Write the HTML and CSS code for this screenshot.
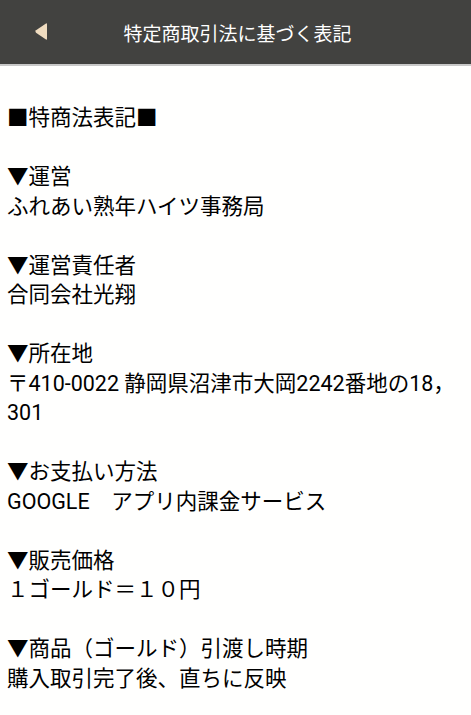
FILE: index.html
```html
<!DOCTYPE html>
<html lang="ja">
<head>
<meta charset="utf-8">
<link rel="stylesheet" href="styles.css">
</head>
<body>
<header class="topbar">
  <span class="back">
    <svg width="14" height="19" viewBox="0 0 14 19"><path d="M12 1.5 L2 8.2 Q0.8 9.5 2 10.8 L12 17.5 Q13 18 13 16.8 L13 2.2 Q13 1 12 1.5 Z" fill="#f0dcc0"/></svg>
  </span>
  <h1 class="title">特定商取引法に基づく表記</h1>
</header>
<main class="content">
  <section class="block">
    <p>■特商法表記■</p>
  </section>
  <section class="block">
    <p>▼運営</p>
    <p>ふれあい熟年ハイツ事務局</p>
  </section>
  <section class="block">
    <p>▼運営責任者</p>
    <p>合同会社光翔</p>
  </section>
  <section class="block">
    <p>▼所在地</p>
    <p>〒410-0022 静岡県沼津市大岡2242番地の18，301</p>
  </section>
  <section class="block">
    <p>▼お支払い方法</p>
    <p>GOOGLE　アプリ内課金サービス</p>
  </section>
  <section class="block">
    <p>▼販売価格</p>
    <p>１ゴールド＝１０円</p>
  </section>
  <section class="block">
    <p>▼商品（ゴールド）引渡し時期</p>
    <p>購入取引完了後、直ちに反映</p>
  </section>
</main>
</body>
</html>
```

FILE: styles.css
```css
html, body {
  margin: 0;
  padding: 0;
  background: #fffffe;
}
body {
  font-family: Roboto, "Noto Sans CJK JP", "Noto Sans", sans-serif;
  color: #000;
}
.topbar {
  height: 64px;
  background: #424240;
  border-bottom: 2px solid #c8c8c8;
  display: flex;
  align-items: center;
  justify-content: center;
  position: relative;
}
.back {
  position: absolute;
  left: 34px;
  top: 22px;
  display: block;
  line-height: 0;
}
.title {
  margin: 0;
  color: #ffffff;
  font-size: 19px;
  font-weight: normal;
  margin-left: 4px;
}
.content {
  padding: 37px 8px 0 7px;
  font-size: 21.5px;
  line-height: 29.5px;
  display: flex;
  flex-direction: column;
  gap: 29.5px;
}
.block p {
  margin: 0;
}
```
